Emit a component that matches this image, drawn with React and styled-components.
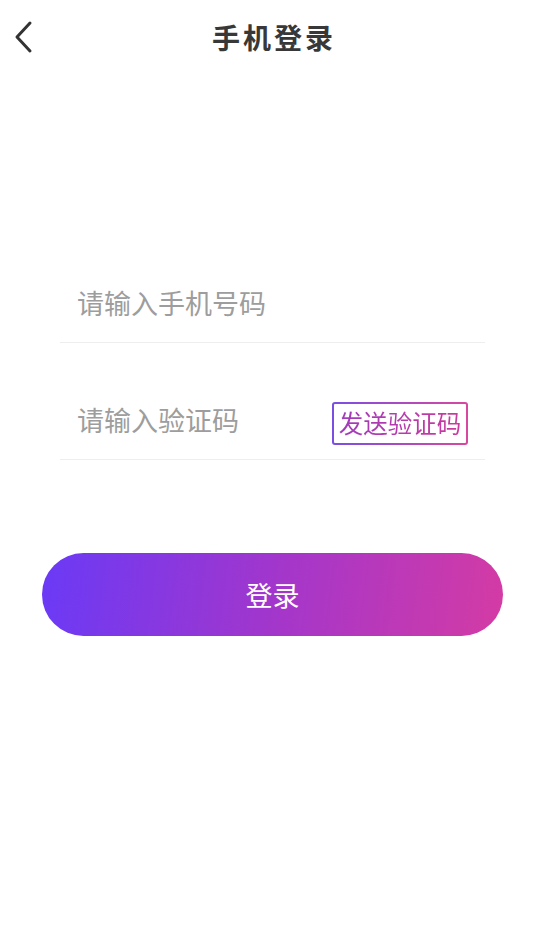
import React from 'react'
import styled, { createGlobalStyle } from 'styled-components'

const GlobalStyle = createGlobalStyle`
  html, body {
    margin: 0;
    padding: 0;
    background: #fff;
    font-family: "Noto Sans CJK SC", "Noto Sans", sans-serif;
  }
  * { box-sizing: border-box; }
`

const Page = styled.div`
  width: 544px;
  min-height: 949px;
  background: #fff;
`

const Header = styled.div`
  display: grid;
  grid-template-columns: 70px 1fr 70px;
  align-items: center;
  height: 73px;
`

const BackButton = styled.button`
  display: flex;
  align-items: center;
  padding: 0 0 0 12px;
  border: none;
  background: none;
  height: 40px;
  cursor: pointer;
`

const Title = styled.h1`
  margin: 0 0 0 4px;
  text-align: center;
  font-size: 28px;
  font-weight: 700;
  letter-spacing: 3px;
  color: #383838;
`

const Form = styled.div`
  margin: 192px 59px 0 60px;
  display: flex;
  flex-direction: column;
  gap: 39px;
`

const Row = styled.div`
  display: flex;
  align-items: center;
  height: 78px;
  padding: 0 17px;
  border-bottom: 1px solid #eeeeee;
`

const Field = styled.input`
  flex: 1;
  min-width: 0;
  border: none;
  outline: none;
  padding: 0 0 2px;
  background: transparent;
  font-family: inherit;
  font-size: 27px;
  color: #333;
  &::placeholder {
    color: #9d9d9d;
  }
`

const SendCode = styled.button`
  flex: none;
  width: 136px;
  height: 43px;
  margin-top: 6px;
  padding: 0;
  border: 2px solid transparent;
  border-radius: 3px;
  background:
    linear-gradient(#fff, #fff) padding-box,
    linear-gradient(90deg, #7a4ee2, #d9479f) border-box;
  font-family: inherit;
  font-size: 24.5px;
  line-height: 1;
  cursor: pointer;

  span {
    background: linear-gradient(90deg, #a03cbc, #c93a9c);
    -webkit-background-clip: text;
    background-clip: text;
    color: transparent;
  }
`

const LoginButton = styled.button`
  display: block;
  width: 461px;
  height: 83px;
  margin: 93px 0 0 42px;
  border: none;
  border-radius: 42px;
  background: linear-gradient(97deg, #6a3af6 0%, #a236cc 50%, #d43ba4 100%);
  color: #fff;
  font-family: inherit;
  font-size: 27px;
  cursor: pointer;
`

const ChevronLeft = () => (
  <svg width="22" height="34" viewBox="0 0 22 34" fill="none">
    <path d="M18 3 L5 17 L18 31" stroke="#333" strokeWidth="3" strokeLinecap="round" strokeLinejoin="round" />
  </svg>
)

export default function App() {
  return (
    <Page>
      <GlobalStyle />
      <Header>
        <BackButton aria-label="返回">
          <ChevronLeft />
        </BackButton>
        <Title>手机登录</Title>
        <div />
      </Header>

      <Form>
        <Row>
          <Field type="tel" placeholder="请输入手机号码" />
        </Row>
        <Row>
          <Field type="text" placeholder="请输入验证码" />
          <SendCode><span>发送验证码</span></SendCode>
        </Row>
      </Form>

      <LoginButton>登录</LoginButton>
    </Page>
  )
}
